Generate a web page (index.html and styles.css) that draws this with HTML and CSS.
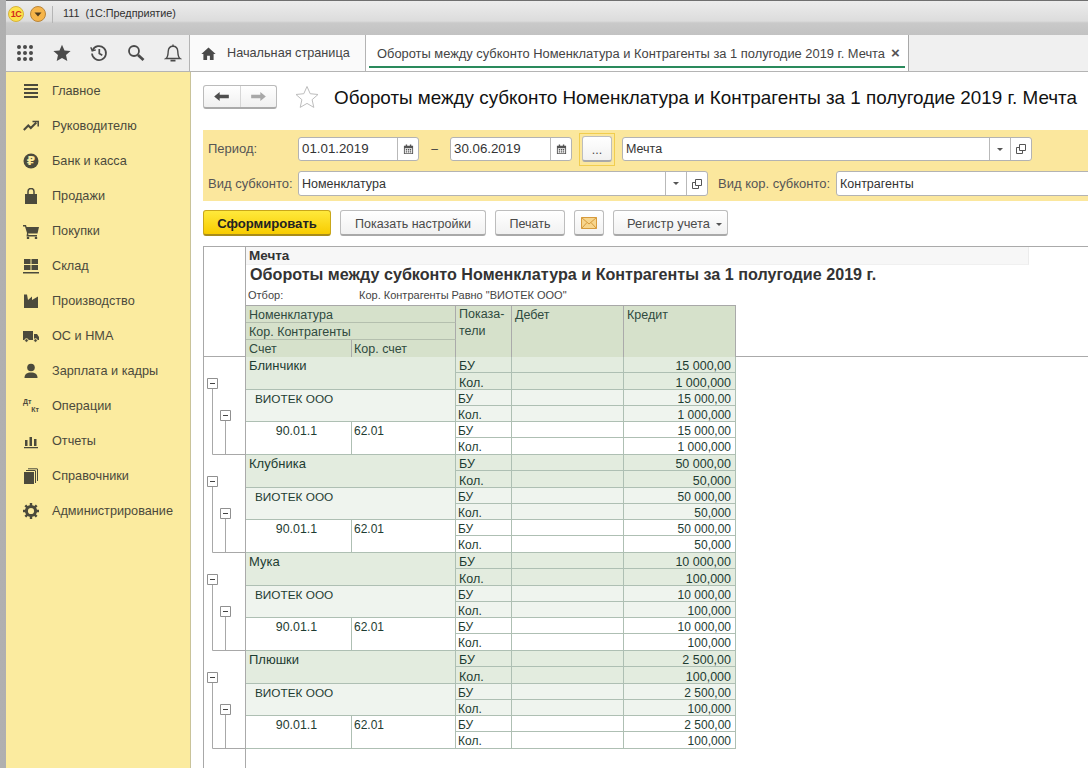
FILE: index.html
```html
<!DOCTYPE html>
<html lang="ru">
<head>
<meta charset="utf-8">
<title>1С:Предприятие</title>
<link rel="stylesheet" href="styles.css">
</head>
<body>
<div class="app">
  <header class="titlebar">
    <span class="logo">1С</span>
    <span class="menu-dot"><svg viewBox="0 0 16 16" width="16" height="16"><circle cx="8" cy="8" r="7.5" fill="#f6b54a" stroke="#b9853a"/><path d="M4.5 6.5h7L8 10.5z" fill="#4d3a1e"/></svg></span>
    <span class="title-sep"></span>
    <span class="title-text">111&nbsp; (1С:Предприятие)</span>
  </header>
  <div class="strip">
    <div class="strip-tools">
      <svg class="tool t-grid" viewBox="0 0 18 18" width="18" height="18" fill="#4a4a4a"><circle cx="3" cy="3" r="2"/><circle cx="9" cy="3" r="2"/><circle cx="15" cy="3" r="2"/><circle cx="3" cy="9" r="2"/><circle cx="9" cy="9" r="2"/><circle cx="15" cy="9" r="2"/><circle cx="3" cy="15" r="2"/><circle cx="9" cy="15" r="2"/><circle cx="15" cy="15" r="2"/></svg>
      <svg class="tool" viewBox="0 0 18 18" width="18" height="18" fill="#4a4a4a"><path d="M9 .8l2.5 5.6 6.1.6-4.6 4.1 1.3 6L9 14l-5.3 3.1 1.3-6L.4 7l6.1-.6z"/></svg>
      <svg class="tool" viewBox="0 0 18 18" width="18" height="18" fill="none" stroke="#4a4a4a" stroke-width="1.7"><path d="M2.6 6.2A7 7 0 1 1 2 9.5"/><path d="M.8 3.2l1.4 3.6 3.6-.9" stroke-width="1.4"/><path d="M9.3 5v4.5l3 1.7"/></svg>
      <svg class="tool" viewBox="0 0 18 18" width="18" height="18" fill="none" stroke="#4a4a4a"><circle cx="7" cy="7" r="5" stroke-width="1.8"/><path d="M11 11l5.5 5" stroke-width="2.8"/></svg>
      <svg class="tool" viewBox="0 0 18 18" width="18" height="18" fill="none" stroke="#4a4a4a" stroke-width="1.4"><path d="M2 14.5c2-1.5 2-4 2.2-7C4.400 4 6.500 2.200 9 2.200s4.600 1.800 4.800 5.300c.2 3 .2 5.500 2.200 7z"/><path d="M6.500 16.600h5" stroke-width="1.800"/><path d="M9 .5v1.700"/></svg>
    </div>
    <div class="tab tab-home">
      <svg viewBox="0 0 16 14" width="15" height="13" fill="#4a4a4a"><path d="M8 .5L.3 7.500h2.200V14h4V9.500h3V14h4V7.500h2.200z"/></svg>
      <span>Начальная страница</span>
    </div>
    <div class="tab tab-active">
      <span class="tab-active-text">Обороты между субконто Номенклатура и Контрагенты за 1 полугодие 2019 г. Мечта</span>
      <span class="tab-close">×</span>
    </div>
    <div class="strip-rest"></div>
  </div>
  <div class="main">
    <nav class="sidebar">
      <a class="nav"><svg viewBox="0 0 16 16" width="16" height="16" fill="#4b4a3c"><path d="M1 1h14v2H1zM1 5h14v2H1zM1 9h14v2H1zM1 13h14v2H1z"/></svg>Главное</a>
      <a class="nav"><svg viewBox="0 0 16 16" width="16" height="16" fill="none" stroke="#4b4a3c" stroke-width="2"><path d="M.8 12l4.500-4.500 2.500 2.500 5.500-5.500"/><path d="M9.500 3.500h5.700v5" stroke-width="1.500"/></svg>Руководителю</a>
      <a class="nav"><svg viewBox="0 0 16 16" width="16" height="16"><circle cx="8" cy="8" r="7.500" fill="#4b4a3c"/><text x="8" y="12" class="rub">₽</text></svg>Банк и касса</a>
      <a class="nav"><svg viewBox="0 0 16 16" width="16" height="16" fill="#4b4a3c"><path d="M2 6h12v10H2z"/><path d="M5 7V3.500a3 3 0 0 1 6 0V7" fill="none" stroke="#4b4a3c" stroke-width="1.500"/></svg>Продажи</a>
      <a class="nav"><svg viewBox="0 0 16 16" width="16" height="16" fill="#4b4a3c"><path d="M0 2h3l.6 2H16l-1.500 6.500H5L5.500 12H14v1.500H3.500L4 10 2 3.500H0z"/><circle cx="5" cy="15" r="1.300"/><circle cx="13" cy="15" r="1.300"/></svg>Покупки</a>
      <a class="nav"><svg viewBox="0 0 16 16" width="16" height="16" fill="#4b4a3c"><path d="M1 1h6.500v5H1zM8.500 1H15v5H8.500zM1 7h6.500v5H1zM8.500 7H15v5H8.500zM0 14h16v1.500H0z"/></svg>Склад</a>
      <a class="nav"><svg viewBox="0 0 16 16" width="16" height="16" fill="#4b4a3c"><path d="M1 15V1.500h3L5 7l4-3.500V7l6-3.500V15z"/></svg>Производство</a>
      <a class="nav"><svg viewBox="0 0 16 16" width="16" height="16" fill="#4b4a3c"><path d="M0 3h10v9H0zM11 6h3l2 3v3h-5z"/><circle cx="3.500" cy="12.500" r="1.800" stroke="#fbeb9f"/><circle cx="12.500" cy="12.500" r="1.800" stroke="#fbeb9f"/></svg>ОС и НМА</a>
      <a class="nav"><svg viewBox="0 0 16 16" width="16" height="16" fill="#4b4a3c"><circle cx="8" cy="4.500" r="3.800"/><path d="M1.500 15c0-4 2.500-5.500 6.500-5.500s6.500 1.500 6.500 5.500z"/></svg>Зарплата и кадры</a>
      <a class="nav"><span class="dtkt"><span class="dt">Дт</span><span class="kt">Кт</span></span>Операции</a>
      <a class="nav"><svg viewBox="0 0 16 16" width="16" height="16" fill="#4b4a3c"><path d="M2 7h2.500v6H2zM6.500 4h2.500v9H6.500zM11 6h2.500v7H11zM1 14h14v1.300H1z"/></svg>Отчеты</a>
      <a class="nav"><svg viewBox="0 0 16 16" width="16" height="16" fill="#4b4a3c"><path d="M1 4h10v12H1z"/><path d="M12.500 3v12M14.500 1v12M3 2.500h9.500M5 .8h9.500" fill="none" stroke="#4b4a3c"/></svg>Справочники</a>
      <a class="nav"><svg viewBox="0 0 16 16" width="16" height="16"><circle cx="8" cy="8" r="4.600" fill="none" stroke="#4b4a3c" stroke-width="3"/><path d="M8 0v16M0 8h16M2.300 2.300l11.400 11.400M13.700 2.300L2.300 13.700" stroke="#4b4a3c" stroke-width="2.400" stroke-dasharray="3.200 9.600 3.200 0"/></svg>Администрирование</a>
    </nav>
    <main class="content">
      <div class="head">
        <div class="nav-btns">
          <span class="nav-arrow"><svg viewBox="0 0 16 12" width="15" height="11" fill="#4e4e4e"><path d="M0 6l6-5v3h10v4H6v3z"/></svg></span>
          <span class="nav-arrow"><svg viewBox="0 0 16 12" width="15" height="11" fill="#a8a8a8"><path d="M16 6l-6-5v3H0v4h10v3z"/></svg></span>
        </div>
        <svg class="star" viewBox="0 0 24 24" width="24" height="24" fill="none" stroke="#bdbdbd"><path d="M12 1.500l3.200 7.200 7.800.8-5.900 5.200 1.700 7.700-6.800-4-6.800 4 1.700-7.700L1 9.500l7.800-.8z"/></svg>
        <h1>Обороты между субконто Номенклатура и Контрагенты за 1 полугодие 2019 г. Мечта</h1>
      </div>
      <section class="filters">
        <div class="frow frow-top">
          <label class="flabel">Период:</label>
          <div class="field f-date1"><span class="fval fval-date">01.01.2019</span><span class="fbtn"><svg viewBox="0 0 12 12" width="11" height="11" fill="#555"><path d="M1 2h10v9H1zM2 4.500v5.500h8V4.500z" fill-rule="evenodd"/><path d="M3 .5h1.500V3H3zM7.500 .5H9V3H7.500zM3 5.500h1.500V7H3zM5.300 5.500h1.500V7H5.300zM7.500 5.500H9V7H7.500zM3 7.800h1.500v1.500H3zM5.300 7.800h1.500v1.500H5.300zM7.500 7.800H9v1.500H7.500z"/></svg></span></div>
          <span class="dash">–</span>
          <div class="field f-date2"><span class="fval fval-date">30.06.2019</span><span class="fbtn"><svg viewBox="0 0 12 12" width="11" height="11" fill="#555"><path d="M1 2h10v9H1zM2 4.500v5.500h8V4.500z" fill-rule="evenodd"/><path d="M3 .5h1.500V3H3zM7.500 .5H9V3H7.500zM3 5.500h1.500V7H3zM5.300 5.500h1.500V7H5.300zM7.500 5.500H9V7H7.500zM3 7.800h1.500v1.500H3zM5.300 7.800h1.500v1.500H5.300zM7.500 7.800H9v1.500H7.500z"/></svg></span></div>
          <span class="focus"><button class="btn btn-dots">...</button></span>
          <div class="field f-org"><span class="fval">Мечта</span><span class="fbtn fbtn-sm"><i class="caret"></i></span><span class="fbtn fbtn-sm"><svg viewBox="0 0 12 12" width="12" height="12" fill="none" stroke="#555"><path d="M4.500 1.500h6v6h-6zM4.500 4.500h-3v6h6v-3"/></svg></span></div>
        </div>
        <div class="frow">
          <label class="flabel">Вид субконто:</label>
          <div class="field f-kind"><span class="fval">Номенклатура</span><span class="fbtn fbtn-sm"><i class="caret"></i></span><span class="fbtn fbtn-sm"><svg viewBox="0 0 12 12" width="12" height="12" fill="none" stroke="#555"><path d="M4.500 1.500h6v6h-6zM4.500 4.500h-3v6h6v-3"/></svg></span></div>
          <label class="flabel flabel-kor">Вид кор. субконто:</label>
          <div class="field f-kor"><span class="fval">Контрагенты</span></div>
        </div>
      </section>
      <div class="actions">
        <button class="btn btn-primary">Сформировать</button>
        <button class="btn b-settings">Показать настройки</button>
        <button class="btn b-print">Печать</button>
        <button class="btn b-mail"><svg viewBox="0 0 16 12" width="16" height="12"><path d="M.5.500h15v11H.5z" fill="#f7d58c" stroke="#d69a3c"/><path d="M.5.500L8 7l7.500-6.500M.5 11.500L6 5.500M15.500 11.500L10 5.500" fill="none" stroke="#d69a3c"/></svg></button>
        <button class="btn b-reg">Регистр учета<i class="caret caret-btn"></i></button>
      </div>
      <section class="report">
        <div class="rhead">
          <div class="gutter"></div>
          <div class="rmain">
            <div class="r-org">Мечта</div>
            <div class="r-title">Обороты между субконто Номенклатура и Контрагенты за 1 полугодие 2019 г.</div>
            <div class="r-filter"><span class="r-filter-l">Отбор:</span><span>Кор. Контрагенты Равно "ВИОТЕК ООО"</span></div>
            <table class="grid ghead">
              <colgroup><col class="c1"><col class="c2"><col class="c3"><col class="c4"><col class="c5"></colgroup>
              <tr><td colspan="2">Номенклатура</td><td rowspan="3" class="wrap">Показа-<br>тели</td><td rowspan="3">Дебет</td><td rowspan="3">Кредит</td></tr>
              <tr><td colspan="2">Кор. Контрагенты</td></tr>
              <tr class="last"><td>Счет</td><td class="cor">Кор. счет</td></tr>
            </table>
          </div>
        </div>
        <div class="rbody">
          <div class="gutter">
            <svg class="tree" viewBox="0 0 41 98" width="41" height="98"><path d="M8.500 31v66.500H41M21.500 63v34.500" fill="none" stroke="#a8a8a8"/><path d="M3.500 21.500h10v10h-10zM16.500 53.500h10v10h-10z" fill="#fff" stroke="#909090"/><path d="M6 26.500h5M19 58.500h5" stroke="#444"/></svg>
            <svg class="tree" viewBox="0 0 41 98" width="41" height="98"><path d="M8.500 31v66.500H41M21.500 63v34.500" fill="none" stroke="#a8a8a8"/><path d="M3.500 21.500h10v10h-10zM16.500 53.500h10v10h-10z" fill="#fff" stroke="#909090"/><path d="M6 26.500h5M19 58.500h5" stroke="#444"/></svg>
            <svg class="tree" viewBox="0 0 41 98" width="41" height="98"><path d="M8.500 31v66.500H41M21.500 63v34.500" fill="none" stroke="#a8a8a8"/><path d="M3.500 21.500h10v10h-10zM16.500 53.500h10v10h-10z" fill="#fff" stroke="#909090"/><path d="M6 26.500h5M19 58.500h5" stroke="#444"/></svg>
            <svg class="tree" viewBox="0 0 41 98" width="41" height="98"><path d="M8.500 31v66.500H41M21.500 63v34.500" fill="none" stroke="#a8a8a8"/><path d="M3.500 21.500h10v10h-10zM16.500 53.500h10v10h-10z" fill="#fff" stroke="#909090"/><path d="M6 26.500h5M19 58.500h5" stroke="#444"/></svg>
          </div>
          <div class="rmain">
            <table class="grid gbody">
              <colgroup><col class="c1"><col class="c2"><col class="c3"><col class="c4"><col class="c5"></colgroup>
              <tr class="l1 h16"><td colspan="2" rowspan="2" class="name">Блинчики</td><td>БУ</td><td></td><td class="n">15 000,00</td></tr>
              <tr class="l1 h17"><td>Кол.</td><td></td><td class="n">1 000,000</td></tr>
              <tr class="l2 h16"><td colspan="2" rowspan="2" class="i2">ВИОТЕК ООО</td><td class="ind">БУ</td><td></td><td class="n">15 000,00</td></tr>
              <tr class="l2 h16"><td class="ind">Кол.</td><td></td><td class="n">1 000,000</td></tr>
              <tr class="l3 h16"><td rowspan="2" class="acc">90.01.1</td><td rowspan="2" class="cor">62.01</td><td class="ind">БУ</td><td></td><td class="n">15 000,00</td></tr>
              <tr class="l3 h17"><td class="ind">Кол.</td><td></td><td class="n">1 000,000</td></tr>
              <tr class="l1 h16"><td colspan="2" rowspan="2" class="name">Клубника</td><td>БУ</td><td></td><td class="n">50 000,00</td></tr>
              <tr class="l1 h17"><td>Кол.</td><td></td><td class="n">50,000</td></tr>
              <tr class="l2 h16"><td colspan="2" rowspan="2" class="i2">ВИОТЕК ООО</td><td class="ind">БУ</td><td></td><td class="n">50 000,00</td></tr>
              <tr class="l2 h16"><td class="ind">Кол.</td><td></td><td class="n">50,000</td></tr>
              <tr class="l3 h16"><td rowspan="2" class="acc">90.01.1</td><td rowspan="2" class="cor">62.01</td><td class="ind">БУ</td><td></td><td class="n">50 000,00</td></tr>
              <tr class="l3 h17"><td class="ind">Кол.</td><td></td><td class="n">50,000</td></tr>
              <tr class="l1 h16"><td colspan="2" rowspan="2" class="name">Мука</td><td>БУ</td><td></td><td class="n">10 000,00</td></tr>
              <tr class="l1 h17"><td>Кол.</td><td></td><td class="n">100,000</td></tr>
              <tr class="l2 h16"><td colspan="2" rowspan="2" class="i2">ВИОТЕК ООО</td><td class="ind">БУ</td><td></td><td class="n">10 000,00</td></tr>
              <tr class="l2 h16"><td class="ind">Кол.</td><td></td><td class="n">100,000</td></tr>
              <tr class="l3 h16"><td rowspan="2" class="acc">90.01.1</td><td rowspan="2" class="cor">62.01</td><td class="ind">БУ</td><td></td><td class="n">10 000,00</td></tr>
              <tr class="l3 h17"><td class="ind">Кол.</td><td></td><td class="n">100,000</td></tr>
              <tr class="l1 h16"><td colspan="2" rowspan="2" class="name">Плюшки</td><td>БУ</td><td></td><td class="n">2 500,00</td></tr>
              <tr class="l1 h17"><td>Кол.</td><td></td><td class="n">100,000</td></tr>
              <tr class="l2 h16"><td colspan="2" rowspan="2" class="i2">ВИОТЕК ООО</td><td class="ind">БУ</td><td></td><td class="n">2 500,00</td></tr>
              <tr class="l2 h16"><td class="ind">Кол.</td><td></td><td class="n">100,000</td></tr>
              <tr class="l3 h16"><td rowspan="2" class="acc">90.01.1</td><td rowspan="2" class="cor">62.01</td><td class="ind">БУ</td><td></td><td class="n">2 500,00</td></tr>
              <tr class="l3 h17"><td class="ind">Кол.</td><td></td><td class="n">100,000</td></tr>
            </table>
          </div>
        </div>
      </section>
    </main>
  </div>
</div>
</body>
</html>
```

FILE: styles.css
```css
* { box-sizing: border-box; }
html, body { margin: 0; padding: 0; }
body { width: 1088px; height: 768px; overflow: hidden; background: #fff; font-family: "Liberation Sans", Arial, sans-serif; font-size: 12px; color: #333; }

.app { width: 1088px; height: 768px; display: flex; flex-direction: column; overflow: hidden; border-left: 6px solid #9b9b9b; border-image: linear-gradient(to right, #b0b0b0 0, #777 20%, #888 60%, #c6c6c6 100%) 1; }

.titlebar { height: 35px; margin-left: -6px; width: 1088px; display: flex; align-items: flex-start; padding: 5px 0 0 8px; border-top: 1px solid #6f6f6f; background: linear-gradient(#ececec 0, #dcdcdc 20px, #c9c9c9 22px, #c2c2c2 34px); flex: none; }
.logo { width: 16px; height: 16px; border-radius: 50%; background: #fde24a; border: 1px solid #d6b23c; color: #d32a1a; font-size: 9px; font-weight: bold; letter-spacing: -0.5px; line-height: 14px; text-align: center; }
.menu-dot { margin-left: 6px; height: 16px; }
.title-sep { width: 1px; height: 17px; margin-left: 6px; background: #b5b5b5; }
.title-text { margin-left: 10px; font-size: 10.800px; line-height: 14px; color: #303030; }

.strip { height: 37px; display: flex; flex: none; background: #f0f0f0; border-bottom: 1px solid #b4b4b4; }
.strip-tools { width: 184px; flex: none; display: flex; align-items: center; padding-left: 10px; gap: 19px; background: #eeeeee; border-right: 1px solid #b4b4b4; }
.tab { height: 36px; display: flex; align-items: center; flex: none; }
.tab-home { width: 176px; padding-left: 11px; gap: 11px; background: #fafafa; border-right: 1px solid #b4b4b4; font-size: 12.700px; color: #444; }
.tab-active { width: 543px; padding-left: 11px; background: #fff; border-right: 1px solid #a8a8a8; position: relative; }
.tab-active::after { content: ""; position: absolute; left: 3px; right: 3px; bottom: 3px; height: 2px; background: #2a8a5c; }
.tab-active-text { font-size: 12.880px; color: #444; white-space: nowrap; }
.tab-close { margin-left: 6px; font-size: 15px; font-weight: bold; color: #555; line-height: 12px; }
.strip-rest { flex: 1; }

.main { flex: 1; display: flex; min-height: 0; }
.sidebar { width: 185px; flex: none; background: #fbeb9f; border-right: 1px solid #c9c39a; padding: 1px 0 0 17px; }
.nav { height: 35px; display: flex; align-items: center; gap: 13px; font-size: 12.700px; color: #4b4a3c; white-space: nowrap; }
.nav svg { flex: none; }
.rub { fill: #fbeb9f; font: bold 12px "DejaVu Sans", sans-serif; text-anchor: middle; }
.dtkt { width: 16px; height: 16px; flex: none; display: flex; flex-direction: column; font-size: 7px; font-weight: bold; line-height: 8px; }
.dt { align-self: flex-start; }
.kt { align-self: flex-end; }

.content { flex: 1; min-width: 0; display: flex; flex-direction: column; padding-top: 12px; overflow: hidden; }
.head { height: 25px; margin-left: 12px; display: flex; align-items: center; flex: none; }
.nav-btns { width: 74px; height: 24px; display: flex; flex: none; border: 1px solid #bbb; border-bottom: 2px solid #aaa; border-radius: 3px; background: linear-gradient(#fff, #f0f0f0); }
.nav-arrow { flex: 1; display: flex; align-items: center; justify-content: center; }
.nav-arrow + .nav-arrow { border-left: 1px solid #d6d6d6; }
.star { margin-left: 18px; flex: none; }
h1 { margin: 2px 0 0 15px; font-size: 18.840px; font-weight: normal; color: #111; white-space: nowrap; }

.filters { margin: 21px 0 0 12px; height: 71px; padding-top: 7px; background: #fbe79d; flex: none; overflow: hidden; }
.frow { height: 25px; display: flex; align-items: center; white-space: nowrap; margin-bottom: 9px; }
.frow-top { height: 24px; margin-bottom: 10px; }
.frow-top .field { height: 24px; }
.frow-top .flabel { padding-bottom: 2px; }
.flabel { width: 95px; padding-left: 5px; flex: none; font-size: 13px; color: #555; }
.flabel-kor { padding: 0; margin-left: 10px; width: 118px; }
.field { height: 25px; flex: none; display: flex; background: #fff; border: 1px solid #b3b3b3; border-radius: 3px; align-items: center; }
.fval { flex: 1; padding-left: 3px; font-size: 12.500px; color: #333; }
.fval-date { font-size: 13.300px; padding-bottom: 2px; }
.fbtn { width: 21px; height: 100%; display: flex; align-items: center; justify-content: center; border-left: 1px solid #b9b9b9; }
.fbtn-sm { flex: none; }
.f-date1 { width: 121px; }
.f-date2 { width: 122px; }
.f-org { width: 410px; }
.f-kind { width: 410px; }
.f-kor { width: 300px; }
.dash { width: 31px; text-align: center; color: #444; }
.focus { width: 36px; height: 33px; margin: 0 7px; display: flex; align-items: center; justify-content: center; border: 1px solid #f1cd4e; flex: none; }
.btn-dots { width: 30px; height: 25px; padding: 0 0 2px; font-size: 10px; }
.caret { display: block; width: 0; height: 0; border-left: 3px solid transparent; border-right: 3px solid transparent; border-top: 3px solid #555; }
.caret-btn { display: inline-block; margin: 0 0 2px 6px; }

.actions { height: 26px; margin: 9px 0 0 12px; display: flex; gap: 9px; flex: none; }
.btn { height: 26px; border: 1px solid #bdbdbd; border-bottom: 2px solid #a9a9a9; border-radius: 3px; background: linear-gradient(#ffffff, #f1f1f1); font-family: inherit; font-size: 12.500px; color: #4a4a4a; padding: 2px 0 0; flex: none; }
.btn-primary { width: 128px; background: linear-gradient(#ffe93c, #f8cc00); border-color: #c9a71a; border-bottom-color: #a88c1a; font-size: 13.100px; font-weight: bold; color: #222; }
.b-settings { width: 146px; }
.b-print { width: 70px; }
.b-mail { width: 30px; padding: 0; display: flex; align-items: center; justify-content: center; }
.b-reg { width: 115px; font-size: 12.900px; text-align: left; padding-left: 13px; }

.report { margin: 10px 0 0 12px; flex: 1; min-height: 0; border-top: 1px solid #aaa; border-left: 1px solid #a8a8a8; display: flex; flex-direction: column; }
.rhead { height: 110px; flex: none; display: flex; border-bottom: 1px solid #aaa; }
.rbody { flex: 1; display: flex; min-height: 0; }
.gutter { width: 42px; flex: none; border-right: 1px solid #aaa; display: flex; flex-direction: column; }
.tree { display: block; flex: none; }
.rmain { flex: 1; min-width: 0; }
.r-org { width: 783px; height: 18px; padding-left: 3px; background: #f7f7f7; border-bottom: 1px solid #f0f0f0; border-right: 1px solid #ececec; font-size: 13.500px; font-weight: bold; line-height: 18px; color: #333; }
.r-title { height: 20px; padding-left: 4px; font-size: 16.150px; font-weight: bold; line-height: 18px; color: #333; white-space: nowrap; }
.r-filter { height: 20px; padding-left: 2px; display: flex; font-size: 11px; line-height: 20px; color: #444; }
.r-filter-l { width: 111px; flex: none; }

.grid { border-collapse: separate; border-spacing: 0; table-layout: fixed; width: 490px; }
.c1 { width: 106px; }
.c2 { width: 104px; }
.c3 { width: 56px; }
.c4 { width: 112px; }
.c5 { width: 112px; }
.grid td { vertical-align: top; padding: 3px 3px 0; font-size: 12px; line-height: 12px; white-space: nowrap; overflow: hidden; }
.ghead { border-top: 1px solid #a8a8a8; background: #d6e1cb; color: #2f4a3e; }
.ghead td { height: 17px; font-size: 12.500px; border-right: 1px solid #aaa; border-bottom: 1px solid #b4bfae; }
.ghead tr.last td, .ghead td[rowspan] { border-bottom: 0; }
.ghead td.wrap { line-height: 17px; padding-top: 0; }
.ghead td.cor { padding-left: 2px; }
.gbody { color: #1e3c32; }
.gbody td { border-right: 1px solid #aebfb3; border-bottom: 1px solid #aebfb3; }
.gbody tr.h16 td { height: 16px; }
.gbody tr.h17 td { height: 17px; }
.l1 td { background: #e3ecdf; font-size: 12.500px !important; }
.l1.h17 td { padding-top: 4px; }
.l2 td { background: #eff4ee; }
.l3 td { background: #fff; }
.gbody .n { text-align: right; padding-right: 4px; }
.gbody .name { font-size: 13px !important; padding-top: 3px; }
.gbody .i2 { padding-left: 9px; font-size: 11.800px; }
.gbody .acc { text-align: center; padding-right: 7px; font-size: 12.400px; }
.gbody .cor { padding-left: 2px; }
.gbody .ind { padding-left: 2px; }
```
